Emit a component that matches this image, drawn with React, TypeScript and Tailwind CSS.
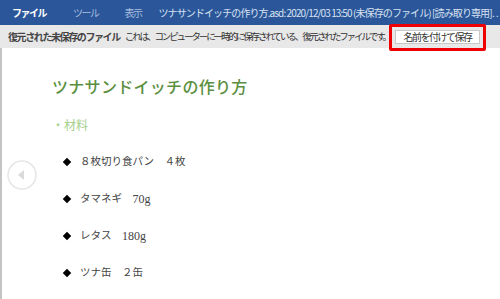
import React from "react";

const items = [
  { jp: "８枚切り食パン　４枚", en: "" },
  { jp: "タマネギ　", en: "70g" },
  { jp: "レタス　", en: "180g" },
  { jp: "ツナ缶　２缶", en: "" },
];

export default function App() {
  return (
    <div className="w-[500px] h-[299px] overflow-hidden bg-white relative font-['Noto_Sans_CJK_JP',sans-serif]">
      {/* title bar */}
      <div className="h-[25px] bg-[#2b579a] flex items-center text-[10px] tracking-[-1.5px] whitespace-nowrap overflow-hidden">
        <span className="ml-[12px] font-bold text-white">ファイル</span>
        <span className="ml-[27px] text-[#a9bedf]">ツール</span>
        <span className="ml-[26px] text-[#a9bedf]">表示</span>
        <span className="ml-[17px] text-[#d9e2f1] tracking-[-0.9px]">
          ツナサンドイッチの作り方.asd: 2020/12/03 13:50 (未保存のファイル) [読み取り専用]…
        </span>
      </div>

      {/* recovered file notice */}
      <div className="h-[23px] bg-[#e8e8e8] flex items-center text-[#333] whitespace-nowrap pr-[20px]">
        <span className="ml-[8px] font-bold text-[#444] text-[10px] tracking-[-1.4px]">復元された未保存のファイル</span>
        <span className="ml-[5px] min-w-0 overflow-hidden text-[9.5px] tracking-[-2.1px]">
          これは、コンピューターに一時的に保存されている、復元されたファイルです。
        </span>
        <button className="ml-auto shrink-0 h-[14px] w-[85px] bg-white border border-[#c8c8c8] flex items-center justify-center text-[10px] tracking-[-1.5px] text-[#333]">
          名前を付けて保存
        </button>
      </div>

      <div className="absolute left-[389px] top-[24px] w-[97px] h-[27px] border-[3px] border-[#ee0000] rounded-[2px]" />

      {/* document */}
      <div className="flex h-[251px] border-l-2 border-[#c4c4c4]">
        <div className="w-[40px] flex items-center justify-center pt-[3px]">
          <svg width="32" height="32" viewBox="0 0 32 32">
            <circle cx="16" cy="16" r="14" fill="none" stroke="#e6e6e6" strokeWidth="1.5" />
            <path d="M12 16 L18 11 L18 21 Z" fill="#dadada" />
          </svg>
        </div>
        <div className="pt-[28px] pl-[10px] font-['Liberation_Serif','Noto_Sans_CJK_JP',serif]">
          <div className="text-[16px] text-[#5b8f3f] tracking-[0.3px] leading-[24px] font-medium">
            ツナサンドイッチの作り方
          </div>
          <div className="mt-[17px] text-[12px] text-[#a5cf8c] leading-[18px]">・材料</div>
          <div className="mt-[18px] flex flex-col gap-[19px]">
            {items.map((t) => (
              <div key={t.jp} className="flex items-center h-[18px] text-[#444]">
                <span className="w-[6px] h-[6px] bg-black rotate-45 ml-[12px]" />
                <span className="ml-[10px] text-[10.5px]">{t.jp}</span>
                {t.en && <span className="text-[12px]">{t.en}</span>}
              </div>
            ))}
          </div>
        </div>
      </div>
    </div>
  );
}
